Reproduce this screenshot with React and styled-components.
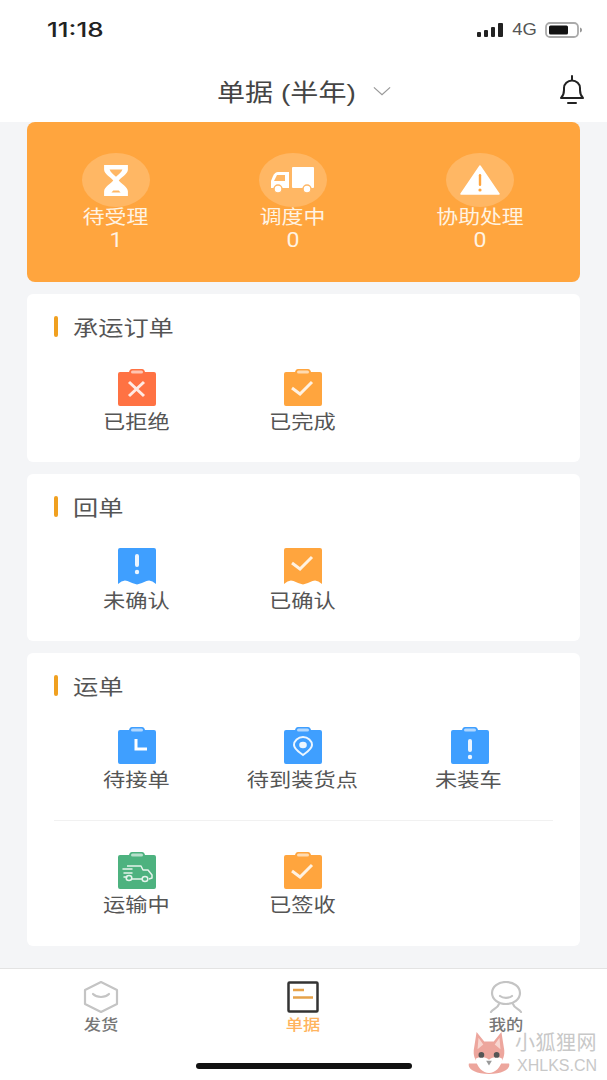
import React from 'react';
import styled, { createGlobalStyle } from 'styled-components';

const GlobalStyle = createGlobalStyle`
  html, body {
    margin: 0;
    padding: 0;
    background: #f4f5f7;
    font-family: "Liberation Sans", "Noto Sans CJK SC", sans-serif;
  }
  * { box-sizing: border-box; }
`;

const Page = styled.div`
  display: flex;
  flex-direction: column;
  height: 1080px;
  overflow: hidden;
  position: relative;
`;

const Header = styled.header`
  background: #fff;
  height: 122px;
  flex: none;
`;

const StatusBar = styled.div`
  align-items: center;
  display: flex;
  height: 60px;
  justify-content: space-between;
  padding: 0 24px 0 47px;
`;

const Clock = styled.span`
  color: #222;
  display: inline-block;
  font-family: Inter, sans-serif;
  font-size: 20px;
  font-weight: 500;
  transform: scaleX(1.3);
  transform-origin: left center;
`;

const StatusIcons = styled.div`
  align-items: center;
  display: flex;
  gap: 8px;
`;

const Network = styled.span`
  color: #555;
  display: inline-block;
  font-family: "Liberation Sans", sans-serif;
  font-size: 16px;
  text-align: center;
  transform: scaleX(1.15);
  width: 25px;
`;

const NavBar = styled.div`
  align-items: center;
  display: flex;
  height: 62px;
  justify-content: center;
  position: relative;
`;

const NavTitle = styled.div`
  align-items: center;
  color: #444;
  display: flex;
  font-size: 24px;
  gap: 18px;
  margin-top: -1px;
`;

const NavTitleText = styled.span`
  display: inline-block;
  transform: scaleX(1.17);
  transform-origin: left center;
  white-space: nowrap;
  width: 138px;
`;

const BellButton = styled.div`
  line-height: 0;
  position: absolute;
  right: 21px;
  top: 15px;
`;

const Main = styled.main`
  display: flex;
  flex: 1;
  flex-direction: column;
  gap: 12px;
  padding: 0 27px;
`;

const Summary = styled.section`
  background: #ffa53e;
  border-radius: 8px;
  display: flex;
  height: 160px;
  justify-content: space-between;
  padding: 31px 56px 0 55px;
`;

const Stat = styled.div`
  align-items: center;
  color: #fff;
  display: flex;
  flex-direction: column;
  width: ${({ $width }) => $width}px;
`;

const StatCircle = styled.div`
  align-items: center;
  background: rgba(255, 255, 255, 0.2);
  border-radius: 50%;
  display: flex;
  height: 54px;
  justify-content: center;
  line-height: 0;
  width: 68px;
`;

const StatLabel = styled.div`
  color: #fff3e2;
  font-size: 19px;
  height: 22px;
  line-height: 22px;
  transform: scaleX(1.15);
  white-space: nowrap;
`;

const StatValue = styled.div`
  color: #fff3e2;
  font-family: Roboto, sans-serif;
  font-size: 21px;
  height: 22px;
  line-height: 22px;
  transform: scaleX(1.1);
`;

const Card = styled.section`
  background: #fff;
  border-radius: 6px;
  height: ${({ $height }) => $height}px;
  padding: 21px 27px 0;
`;

const CardTitle = styled.h2`
  align-items: center;
  color: #555;
  display: flex;
  font-size: 21px;
  font-weight: 400;
  gap: 15px;
  height: 22px;
  margin: 0 0 ${({ $gap }) => $gap}px;
`;

const TitleBar = styled.i`
  background: #f0a020;
  border-radius: 2px;
  display: block;
  flex: none;
  height: 21px;
  width: 4px;
`;

const TitleText = styled.span`
  display: inline-block;
  transform: scaleX(1.2);
  transform-origin: left center;
`;

const ItemGrid = styled.div`
  display: grid;
  grid-template-columns: repeat(3, 1fr);
`;

const Divider = styled.hr`
  border: 0;
  border-top: 1px solid #f1f1f1;
  margin: 27px 0 31px;
`;

const Item = styled.div`
  align-items: center;
  display: flex;
  flex-direction: column;
`;

const ItemIcon = styled.svg`
  display: block;
  height: 37px;
  width: 38px;
`;

const ItemLabel = styled.div`
  color: #555;
  font-size: 19px;
  height: 24px;
  line-height: 24px;
  margin-top: 5px;
  transform: scaleX(1.17) translateX(-1px);
  white-space: nowrap;
`;

const TabBar = styled.nav`
  background: #fff;
  border-top: 1px solid #e3e3e3;
  display: grid;
  flex: none;
  grid-template-columns: repeat(3, 1fr);
  height: 112px;
  padding-top: 12px;
`;

const Tab = styled.div`
  align-items: center;
  color: ${({ $active }) => ($active ? '#ffb45e' : '#777')};
  display: flex;
  flex-direction: column;
`;

const TabIcon = styled.svg`
  display: block;
  height: 32px;
  width: 36px;
`;

const TabLabel = styled.div`
  font-size: 15px;
  font-weight: 500;
  height: 22px;
  line-height: 22px;
  margin-top: 1px;
  transform: scaleX(1.15);
`;

const HomeBar = styled.div`
  background: #111;
  border-radius: 4px;
  bottom: 11px;
  height: 6px;
  left: 196px;
  position: absolute;
  width: 216px;
`;

const Watermark = styled.div`
  align-items: center;
  bottom: 5px;
  display: flex;
  gap: 5px;
  left: 468px;
  position: absolute;
`;

const WatermarkText = styled.div`
  color: #c8c8c8;
  display: flex;
  flex-direction: column;
  gap: 2px;
`;

const WatermarkName = styled.span`
  font-size: 20px;
  height: 23px;
  letter-spacing: 0.5px;
  line-height: 23px;
`;

const WatermarkUrl = styled.span`
  font-family: "Liberation Sans", sans-serif;
  font-size: 16px;
  height: 18px;
  line-height: 18px;
  padding-left: 2px;
`;

const ORANGE = '#ffa53e';
const BLUE = '#3f9fff';
const RED = '#ff7243';
const GREEN = '#4db27f';

const Clipboard = ({ color, children }) => (
  <ItemIcon viewBox="0 0 38 37">
    <path d="M2 3h9c.5-2 1.500-3 3-3h10c1.500 0 2.500 1 3 3h9a2 2 0 0 1 2 2v30a2 2 0 0 1-2 2H2a2 2 0 0 1-2-2V5a2 2 0 0 1 2-2z" fill={color} />
    <rect x="13" y="1.500" width="12" height="3" rx="1.500" fill="#fff" opacity="0.6" />
    {children}
  </ItemIcon>
);

const Receipt = ({ color, children }) => (
  <ItemIcon viewBox="0 0 38 37">
    <path d="M2 0h34a2 2 0 0 1 2 2v34Q33 31 28.500 33 24 35 19 36.500 14 35 9.500 33 5 31 0 36V2a2 2 0 0 1 2-2z" fill={color} />
    {children}
  </ItemIcon>
);

const Check = ({ y = 19 }) => (
  <path d={`M8 ${y}l8 6 12-12`} fill="none" stroke="#fff" strokeWidth="3" opacity="0.85" />
);

const Bang = ({ top = 10 }) => (
  <g fill="#fff" opacity="0.9">
    <rect x="17" y={top} width="4" height="13" rx="2" />
    <circle cx="19" cy={top + 18} r="2.200" />
  </g>
);

const ICONS = {
  rejected: (
    <Clipboard color={RED}>
      <path d="M11 13l15 14M26 13L11 27" stroke="#fff" strokeWidth="3" opacity="0.85" />
    </Clipboard>
  ),
  done: (
    <Clipboard color={ORANGE}>
      <Check />
    </Clipboard>
  ),
  unconfirmed: (
    <Receipt color={BLUE}>
      <Bang top={6} />
    </Receipt>
  ),
  confirmed: (
    <Receipt color={ORANGE}>
      <Check y={15} />
    </Receipt>
  ),
  waiting: (
    <Clipboard color={BLUE}>
      <path d="M18 12v10h11" fill="none" stroke="#fff" strokeWidth="3" />
    </Clipboard>
  ),
  location: (
    <Clipboard color={BLUE}>
      <path d="M19 28c-4-3-9-6-9-10 0-4 4-8 9-8s9 4 9 8c0 4-5 7-9 10z" fill="none" stroke="#fff" strokeWidth="2" opacity="0.9" />
      <ellipse cx="19" cy="18" rx="3.800" ry="3.200" fill="#fff" opacity="0.9" />
    </Clipboard>
  ),
  unloaded: (
    <Clipboard color={BLUE}>
      <Bang top={12} />
    </Clipboard>
  ),
  transit: (
    <Clipboard color={GREEN}>
      <g fill="none" stroke="#fff" strokeWidth="1.500" opacity="0.85">
        <path d="M9 14h14l2 4h5l4 5v3l-3 1M24 27H14" strokeLinejoin="round" />
        <path d="M5 17h9M6 21h8M9 25h-3" strokeLinecap="round" />
        <ellipse cx="11" cy="26" rx="2.800" ry="2.500" />
        <ellipse cx="27" cy="27" rx="2.800" ry="2.500" />
      </g>
    </Clipboard>
  ),
};

const SECTIONS = [
  {
    title: '承运订单',
    height: 168,
    gap: 32,
    rows: [[{ label: '已拒绝', icon: 'rejected' }, { label: '已完成', icon: 'done' }]],
  },
  {
    title: '回单',
    height: 167,
    gap: 31,
    rows: [[{ label: '未确认', icon: 'unconfirmed' }, { label: '已确认', icon: 'confirmed' }]],
  },
  {
    title: '运单',
    height: 293,
    gap: 31,
    rows: [
      [
        { label: '待接单', icon: 'waiting' },
        { label: '待到装货点', icon: 'location' },
        { label: '未装车', icon: 'unloaded' },
      ],
      [{ label: '运输中', icon: 'transit' }, { label: '已签收', icon: 'done' }],
    ],
  },
];

const Signal = () => (
  <svg width="27" height="14" viewBox="0 0 27 14" fill="#222">
    <rect x="0" y="9" width="4" height="5" rx="1" />
    <rect x="7" y="7" width="4" height="7" rx="1" />
    <rect x="14" y="4" width="4" height="10" rx="1" />
    <rect x="21" y="0" width="5" height="14" rx="1" />
  </svg>
);

const Battery = () => (
  <svg width="38" height="16" viewBox="0 0 38 16">
    <rect x="1" y="1" width="32" height="14" rx="4" fill="none" stroke="#aaa" strokeWidth="1.800" />
    <rect x="4" y="3.500" width="19" height="9" rx="1.500" fill="#111" />
    <path d="M35 5.500c1.500.5 2 1.500 2 2.500s-.5 2-2 2.500z" fill="#999" />
  </svg>
);

const Chevron = () => (
  <svg width="18" height="10" viewBox="0 0 20 10" fill="none" stroke="#999" strokeWidth="1.400">
    <path d="M1 1l9 8 9-8" />
  </svg>
);

const Bell = () => (
  <svg width="28" height="30" viewBox="0 0 28 30" fill="none" stroke="#222" strokeWidth="2">
    <path d="M3 23c2-2 3-4 3-8v-2c0-4 3.500-7.500 8-7.500s8 3.500 8 7.500v2c0 4 1 6 3 8z" strokeLinejoin="round" />
    <path d="M14 1v4M10 28h8" strokeLinecap="round" />
  </svg>
);

const Hourglass = () => (
  <svg width="32" height="33" viewBox="0 0 32 36" fill="#fff">
    <path d="M3 1h26v5c0 5-8 9-10 12 2 3 10 7 10 12v5H3v-5c0-5 8-9 10-12C11 15 3 11 3 6z" />
    <path d="M9 6h14c-1 3-4 5-7 8-3-3-6-5-7-8z" fill="#ffb765" />
    <path d="M13 29h6l2 2H11z" fill="#ffb765" />
  </svg>
);

const Truck = () => (
  <svg width="46" height="27" viewBox="0 0 46 27" fill="#fff">
    <rect x="22" y="0" width="22" height="21" rx="1" />
    <path d="M19 5H8Q5 5 3 9L1 14v7h18z" />
    <path d="M7 8h8v6H4z" fill="#ffb765" />
    <circle cx="8" cy="22" r="4" stroke="#ffb765" strokeWidth="1.500" />
    <circle cx="37" cy="22" r="4" stroke="#ffb765" strokeWidth="1.500" />
  </svg>
);

const Warning = () => (
  <svg width="40" height="30" viewBox="0 0 40 30">
    <path d="M20 1l19 28H1z" fill="#fff" stroke="#fff" strokeWidth="1.500" strokeLinejoin="round" />
    <rect x="18.800" y="9" width="2.400" height="12" rx="1.200" fill="#ffa53e" />
    <circle cx="20" cy="25" r="1.600" fill="#ffa53e" />
  </svg>
);

const STATS = [
  { label: '待受理', value: 1, width: 68, icon: <Hourglass /> },
  { label: '调度中', value: 0, width: 68, icon: <Truck /> },
  { label: '协助处理', value: 0, width: 88, icon: <Warning /> },
];

const Fox = () => (
  <svg width="42" height="44" viewBox="0 0 44 46">
    <path d="M1 34c-2 6 7 11 21 11s23-5 21-11z" fill="#eda69d" />
    <path d="M9 1l8 10h10l8-10 3 19c1 10-6 18-16 18S5 30 6 20z" fill="#eda69d" />
    <path d="M11 7l5 7-6 5zM33 7l-5 7 6 5z" fill="#f8d6d0" />
    <path d="M8 29c5-3 10-2 14 1 4-3 9-4 14-1-1 9-8 15-14 15S9 38 8 29z" fill="#fff" />
    <circle cx="14" cy="25" r="3" fill="#555" />
    <circle cx="30" cy="25" r="3" fill="#555" />
    <path d="M19 31h6l-3 5z" fill="#999" />
  </svg>
);

const App = () => (
  <>
    <GlobalStyle />
    <Page>
      <Header>
        <StatusBar>
          <Clock>11:18</Clock>
          <StatusIcons>
            <Signal />
            <Network>4G</Network>
            <Battery />
          </StatusIcons>
        </StatusBar>
        <NavBar>
          <NavTitle>
            <NavTitleText>单据 (半年)</NavTitleText>
            <Chevron />
          </NavTitle>
          <BellButton>
            <Bell />
          </BellButton>
        </NavBar>
      </Header>

      <Main>
        <Summary>
          {STATS.map((stat) => (
            <Stat key={stat.label} $width={stat.width}>
              <StatCircle>{stat.icon}</StatCircle>
              <StatLabel>{stat.label}</StatLabel>
              <StatValue>{stat.value}</StatValue>
            </Stat>
          ))}
        </Summary>

        {SECTIONS.map((section) => (
          <Card key={section.title} $height={section.height}>
            <CardTitle $gap={section.gap}>
              <TitleBar />
              <TitleText>{section.title}</TitleText>
            </CardTitle>
            {section.rows.map((row, index) => (
              <React.Fragment key={index}>
                {index > 0 && <Divider />}
                <ItemGrid>
                  {row.map((item) => (
                    <Item key={item.label}>
                      {ICONS[item.icon]}
                      <ItemLabel>{item.label}</ItemLabel>
                    </Item>
                  ))}
                </ItemGrid>
              </React.Fragment>
            ))}
          </Card>
        ))}
      </Main>

      <TabBar>
        <Tab>
          <TabIcon viewBox="0 0 36 32" fill="none" stroke="#c4c4c4" strokeWidth="2.200">
            <path d="M18 1l16 8v14l-16 8-16-8V9z" strokeLinejoin="round" />
            <path d="M10 13c4 4 12 4 16 0" strokeLinecap="round" />
          </TabIcon>
          <TabLabel>发货</TabLabel>
        </Tab>
        <Tab $active>
          <TabIcon viewBox="0 0 36 32" fill="none">
            <rect x="3.500" y="1.500" width="29" height="29" stroke="#333" strokeWidth="2.500" rx="1" />
            <path d="M8 9h11M8 16.500h20" stroke="#e6a24a" strokeWidth="2.400" />
          </TabIcon>
          <TabLabel>单据</TabLabel>
        </Tab>
        <Tab>
          <TabIcon viewBox="0 0 36 32" fill="none" stroke="#c4c4c4" strokeWidth="2.200">
            <ellipse cx="18" cy="12" rx="14" ry="11" />
            <path d="M12 15c3 2.500 9 2.500 12 0" strokeLinecap="round" />
            <path d="M11 23c-1 4-6 5-8 8M25 23c1 4 6 5 8 8" strokeLinecap="round" />
          </TabIcon>
          <TabLabel>我的</TabLabel>
        </Tab>
      </TabBar>

      <HomeBar />
      <Watermark>
        <Fox />
        <WatermarkText>
          <WatermarkName>小狐狸网</WatermarkName>
          <WatermarkUrl>XHLKS.CN</WatermarkUrl>
        </WatermarkText>
      </Watermark>
    </Page>
  </>
);

export default App;
